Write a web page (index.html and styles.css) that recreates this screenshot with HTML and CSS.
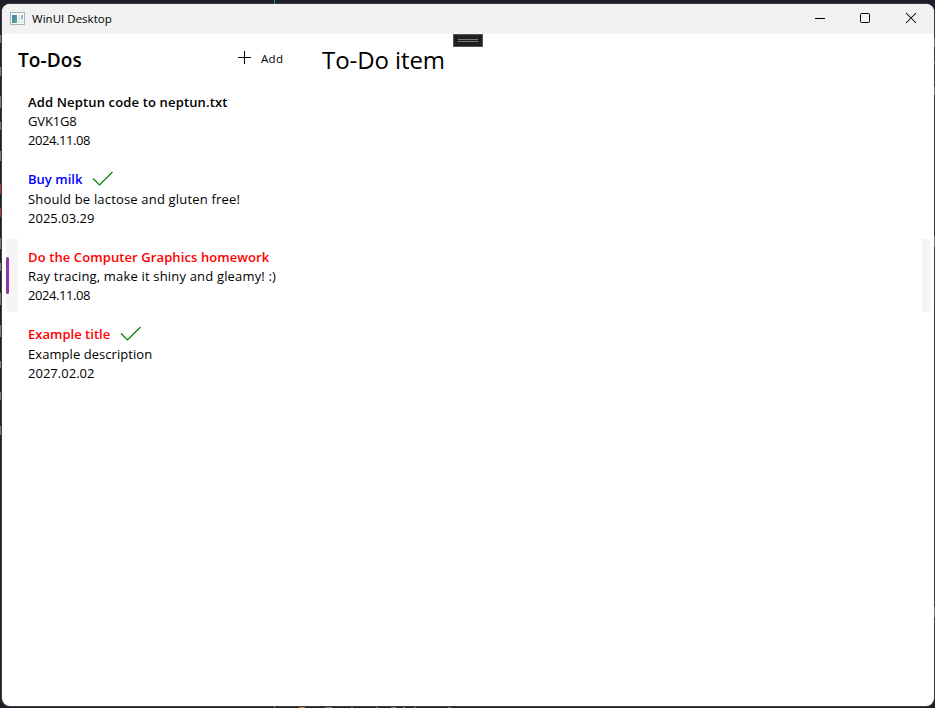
FILE: index.html
```html
<!DOCTYPE html>
<html lang="en">
<head>
<meta charset="utf-8">
<title>WinUI Desktop</title>
<link rel="stylesheet" href="styles.css">
</head>
<body>
<div class="desktop">
  <svg class="backdrop" width="935" height="708" viewBox="0 0 935 708" aria-hidden="true">
    <path d="M274.500 0v4" stroke="#129a88"/>
    <path d="M0 35h1v8h-1zM0 67h1v9h-1zM0 96h1v12h-1zM0 122h1v8h-1zM0 151h1v10h-1zM0 238h1v11h-1zM0 263h1v8h-1zM0 293h1v12h-1zM0 325h1v12h-1zM0 361h1v7h-1zM0 392h1v8h-1zM0 426h1v9h-1z" fill="#777b84"/>
    <path d="M0 184h1v10h-1zM0 208h1v9h-1z" fill="#b3313a"/>
    <path d="M934 38h1v9h-1zM934 62h1v2h-1zM934 87h1v8h-1zM934 236h1v11h-1zM934 607h1v10h-1z" fill="#777"/>
    <path d="M274 706h1v2h-1zM299 707h6v1h-6z" fill="#c47a22"/>
    <path d="M325 707h7v1h-7zM351 707h2v1h-2zM376 707h2v1h-2zM391 707h5v1h-5zM403 707h2v1h-2zM414 707h2v1h-2zM448 707h3v1h-3z" fill="#74747a"/>
  </svg>
  <div class="window">
    <header class="titlebar">
      <svg class="app-icon" width="16" height="14" viewBox="0 0 16 14">
        <defs><linearGradient id="tile" x1="0" y1="0" x2="1" y2="1"><stop offset="0" stop-color="#4478b5"/><stop offset="1" stop-color="#58b47a"/></linearGradient></defs>
        <rect x=".5" y=".5" width="14" height="12" fill="#f8fafb" stroke="#a9b1b8"/>
        <rect x="2" y="3" width="5" height="8" fill="url(#tile)"/>
        <rect x="8" y="3" width="2" height="8" fill="#e0e3e6"/>
        <rect x="11" y="3" width="2" height="4" fill="#91b5d8"/>
        <rect x="11" y="7" width="2" height="4" fill="#dcebe1"/>
      </svg>
      <span class="app-name">WinUI Desktop</span>
      <div class="controls">
        <svg width="46" height="30" viewBox="0 0 46 30"><path d="M17 14.500h10" stroke="#000"/></svg>
        <svg width="46" height="30" viewBox="0 0 46 30"><rect x="16.500" y="9.500" width="9" height="9" rx="1" fill="none" stroke="#000"/></svg>
        <svg width="46" height="30" viewBox="0 0 46 30"><path d="M16 9l10 10M26 9l-10 10" stroke="#000" stroke-width="1.050"/></svg>
      </div>
    </header>
    <div class="debug-handle"></div>
    <main class="content">
      <div class="heading-row">
        <h1 class="list-heading">To-Dos</h1>
        <button class="add">
          <svg width="14" height="14" viewBox="0 0 14 14"><path d="M6.500 0v13M0 6.500h13" stroke="#000"/></svg>
          <span>Add</span>
        </button>
        <h2 class="item-heading">To-Do item</h2>
      </div>
      <ul class="todos">
        <li class="todo">
          <div class="title-row"><span class="title low">Add Neptun code to neptun.txt</span></div>
          <div class="text code">GVK1G8</div>
          <div class="text date narrow">2024.11.08</div>
        </li>
        <li class="todo">
          <div class="title-row done"><span class="title medium">Buy milk</span><svg class="check" width="22" height="16" viewBox="0 0 22 16"><path d="M1 7.500l6.500 6.500L20.500 1" fill="none" stroke="#008000" stroke-width="1.200"/></svg></div>
          <div class="text">Should be lactose and gluten free!</div>
          <div class="text date">2025.03.29</div>
        </li>
        <li class="todo selected">
          <div class="title-row"><span class="title high">Do the Computer Graphics homework</span></div>
          <div class="text">Ray tracing, make it shiny and gleamy! :)</div>
          <div class="text date narrow">2024.11.08</div>
        </li>
        <li class="todo">
          <div class="title-row done"><span class="title high">Example title</span><svg class="check" width="22" height="16" viewBox="0 0 22 16"><path d="M1 7.500l6.500 6.500L20.500 1" fill="none" stroke="#008000" stroke-width="1.200"/></svg></div>
          <div class="text short">Example description</div>
          <div class="text date">2027.02.02</div>
        </li>
      </ul>
    </main>
  </div>
</div>
</body>
</html>
```
FILE: styles.css
```css
* { box-sizing: border-box; }
body { margin: 0; font-family: "Open Sans", "Noto Sans", sans-serif; color: #000; }
.desktop { position: relative; width: 935px; height: 708px; padding: 4px 1px 2px 2px; background: #1d202b; overflow: hidden; }
.backdrop { position: absolute; inset: 0; z-index: 1; }
.window { position: relative; height: 702px; border-radius: 8px; background: #fff; overflow: hidden; box-shadow: 0 0 0 1px #3b3b40; }
.titlebar { display: flex; align-items: center; height: 30px; padding-left: 8px; background: #f2f2f2; }
.app-icon { margin-top: -1px; }
.app-name { margin-left: 6px; font-size: 11.5px; line-height: 16px; letter-spacing: 0.02px; }
.controls { display: flex; margin: 0 -2px 0 auto; }
.debug-handle { position: absolute; top: 30px; left: 451px; width: 30px; height: 13px; border: 1px solid #555; background: linear-gradient(#777, #777) 4px 4px / 20px 1px no-repeat, linear-gradient(#777, #777) 4px 6px / 20px 1px no-repeat, #1f1f1f; }
.heading-row { display: flex; align-items: center; height: 50px; padding-left: 16px; }
h1, h2 { margin: 0; padding-top: 2px; white-space: nowrap; }
.list-heading { width: 220px; font-size: 19px; line-height: 28px; font-weight: 600; letter-spacing: 0.1px; }
.add { display: flex; align-items: center; gap: 9px; width: 84px; padding: 0; border: 0; background: none; color: inherit; font: 11.5px/16px "Open Sans", sans-serif; letter-spacing: 0.3px; }
.add svg { margin-top: -2px; }
.item-heading { font-size: 24px; line-height: 36px; font-weight: 400; letter-spacing: -0.08px; }
.todos { margin: 0; padding: 0 4px; list-style: none; }
.todo { position: relative; margin-bottom: 4px; padding: 9px 0 7px 22px; border-radius: 4px; }
.selected { background: linear-gradient(#f5f5f5, #f5f5f5) left / 12px 100% no-repeat, linear-gradient(#f5f5f5, #f5f5f5) right / 8px 100% no-repeat; }
.selected::before { content: ""; position: absolute; left: 0; top: 18px; width: 3px; height: 37px; border-radius: 2px; background: #8e35a5; }
.title-row { display: flex; align-items: center; gap: 10px; height: 19px; }
.title-row.done { height: 20px; padding-bottom: 2px; }
.title { font-size: 13px; line-height: 19px; font-weight: 600; letter-spacing: 0.1px; white-space: nowrap; }
.done .title { letter-spacing: 0.02px; }
.low { letter-spacing: 0.15px; }
.medium { color: #00f; }
.high { color: #f00; }
.check { display: block; }
.text { font-size: 13px; line-height: 19px; letter-spacing: 0.175px; white-space: nowrap; }
.short { letter-spacing: 0.06px; }
.code { letter-spacing: -0.15px; }
.date { letter-spacing: 0.02px; }
.narrow { letter-spacing: -0.42px; }
```
